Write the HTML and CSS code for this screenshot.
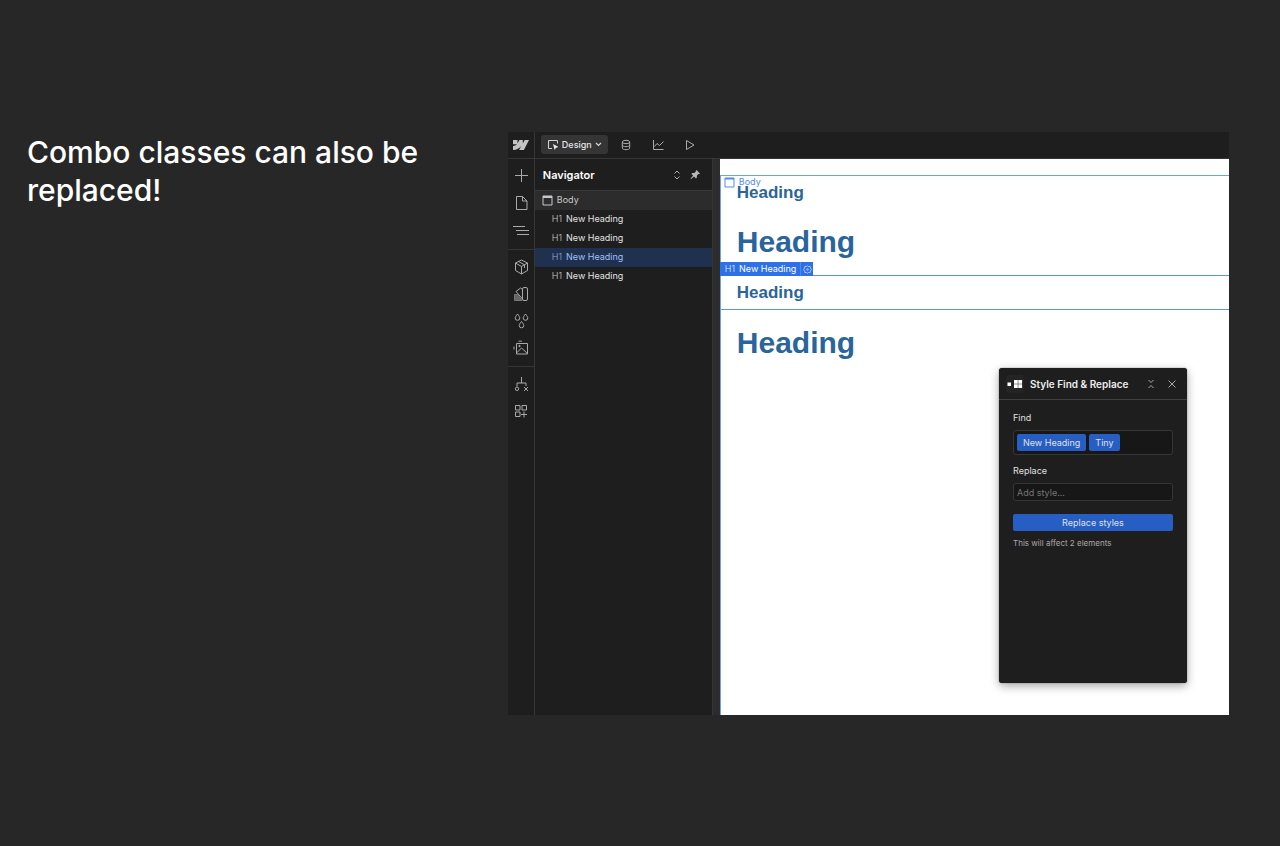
FILE: index.html
```html
<!DOCTYPE html>
<html lang="en">
<head>
<meta charset="utf-8">
<title>Style Find &amp; Replace</title>
<link rel="stylesheet" href="styles.css">
</head>
<body>
<main class="slide">
  <h1 class="slide-title">Combo classes can also be replaced!</h1>
  <section class="app">
    <header class="topbar">
      <div class="logo">
        <svg width="16" height="10" viewBox="0 0 16 10"><path fill="#c4c4c4" d="M16 0l-5.1 10H6.100l2.100-4.100C6.500 8.200 4 9.700 0 10V5.900s2.500-.1 4-1.700H0V0h4.500v3.500L6.400 0h3.400v3.500L11.700 0z"/></svg>
      </div>
      <nav class="modes">
        <button class="mode mode-active">
          <svg width="12" height="12" viewBox="0 0 12 12" fill="none" stroke="#d5d5d5"><path d="M5 9.500H1.500v-8h9v3"/><path d="M6 5l5.500 3-2.500.7L7.700 11z" fill="#eee" stroke="none"/></svg>
          <span>Design</span>
          <svg width="7" height="5" viewBox="0 0 7 5" fill="none" stroke="#d5d5d5" stroke-width="1.200"><path d="M1 1l2.500 2.500L6 1"/></svg>
        </button>
        <button class="mode" aria-label="CMS"><svg width="10" height="12" viewBox="0 0 10 12" fill="none" stroke="#ababab"><ellipse cx="5" cy="3" rx="3.700" ry="1.700"/><path d="M1.300 3v6c0 2.200 7.400 2.200 7.400 0V3M1.300 6c0 2.200 7.400 2.200 7.400 0"/></svg></button>
        <button class="mode" aria-label="Analyze"><svg width="12" height="12" viewBox="0 0 12 12" fill="none" stroke="#ababab"><path d="M1.500 1v9.500h10M2.500 7.500l2.500-3 2.500 2 4-4"/></svg></button>
        <button class="mode" aria-label="Preview"><svg width="12" height="12" viewBox="0 0 12 12" fill="none" stroke="#ababab"><path d="M2.500 1.500L10 6l-7.500 4.500z" stroke-linejoin="round"/></svg></button>
      </nav>
    </header>
    <div class="workspace">
      <nav class="rail">
        <div class="rail-group">
          <button aria-label="Add"><svg width="16" height="16" viewBox="0 0 16 16"><path d="M8.500 2v13M2 8.500h13"/></svg></button>
          <button aria-label="Pages"><svg width="16" height="16" viewBox="0 0 16 16"><path d="M3.500 1.500h6l4.500 4.500v8.500H3.500zM9.500 1.500V6H14"/></svg></button>
          <button aria-label="Navigator"><svg width="16" height="16" viewBox="0 0 16 16"><path d="M0 3.500h12M3 7.500h13M4 11.500h12"/></svg></button>
        </div>
        <div class="rail-group">
          <button aria-label="Components"><svg width="16" height="16" viewBox="0 0 16 16"><path d="M8.500 1l6 3v7.500l-6 3.500-6-3.500V4zM2.500 4l6 3.500 6-3.500M8.500 7.500V15M5.500 2.500l6 3.300V9"/></svg></button>
          <button aria-label="Variables"><svg width="16" height="16" viewBox="0 0 16 16"><path d="M9.500 13V3a1.500 1.500 0 0 1 1.500-1.500h2A1.500 1.500 0 0 1 14.500 3v10a1.500 1.500 0 0 1-1.500 1.500h-2A1.500 1.500 0 0 1 9.500 13zM9.500 3.500L7.500 2 3 5.500l6.500 7.500"/><path d="M1.500 8.500h3L9 14.500H1.500z" fill="#666" stroke="#777"/></svg></button>
          <button aria-label="Styles"><svg width="16" height="16" viewBox="0 0 16 16"><path d="M4.500 1C3 3 2.200 4 2.200 5a2.300 2.300 0 0 0 4.600 0C6.800 4 6 3 4.500 1zM12.500 1c-1.500 2-2.300 3-2.300 4a2.300 2.300 0 0 0 4.600 0c0-1-.8-2-2.300-4zM8.500 8.500c-1.500 2-2.300 3-2.300 4a2.300 2.300 0 0 0 4.600 0c0-1-.8-2-2.300-4z"/></svg></button>
          <button aria-label="Assets"><svg width="16" height="16" viewBox="0 0 16 16"><path d="M3.500 3.500h11v10.500h-11zM3.500 13l5-5 6 5.500"/><circle cx="6.500" cy="6" r=".7" fill="#aaa"/><path stroke="#777" stroke-width="1.500" d="M1 9.500V6.500M5.500 1.200H9"/></svg></button>
        </div>
        <div class="rail-group">
          <button aria-label="Logic"><svg width="16" height="16" viewBox="0 0 16 16"><path d="M8.500 1v6M4 10.500V7h9v3M11 11l4 4M15 11l-4 4"/><circle cx="4" cy="12.800" r="1.700"/></svg></button>
          <button aria-label="Apps"><svg width="16" height="16" viewBox="0 0 16 16"><path d="M2.500 2.500H7V7H2.500zM9 2.500h4.500V7H9zM2.500 9H7v4.500H2.500zM11 8.500v6M8 11.500h6"/></svg></button>
        </div>
      </nav>
      <aside class="navigator">
        <div class="nav-head">
          <h2>Navigator</h2>
          <button aria-label="Expand all"><svg width="8" height="12" viewBox="0 0 8 12" fill="none" stroke="#b0b0b0"><path d="M1.500 4.500L4 2l2.500 2.500M1.500 7.500L4 10l2.500-2.500"/></svg></button>
          <button aria-label="Pin"><svg width="11" height="11" viewBox="0 0 11 11"><path fill="#b8b8b8" d="M6.500 1L10 4.500l-1 .8-.7-.2-1.500 1.700.1 1.700-.9.900-2-2L1.200 10l-.7-.3 2.600-3.200-1.700-1.600.9-.9 1.900.1L6 2.500l-.3-.8z"/></svg></button>
        </div>
        <ul class="tree">
          <li class="tree-root"><svg width="11" height="11" viewBox="0 0 11 11"><path d="M1 1h9v9H1z" fill="none" stroke="#c8c8c8"/><path d="M1 1h9v2H1z" fill="#c8c8c8"/></svg>Body</li>
          <li><span class="tag">H1</span>New Heading</li>
          <li><span class="tag">H1</span>New Heading</li>
          <li class="selected"><span class="tag">H1</span>New Heading</li>
          <li><span class="tag">H1</span>New Heading</li>
        </ul>
      </aside>
      <div class="canvas">
        <div class="page">
          <span class="body-label"><svg width="11" height="11" viewBox="0 0 11 11"><path d="M1 1h9v9H1z" fill="none" stroke="#4e8bf5"/><path d="M1 1h9v1.500H1z" fill="#4e8bf5"/></svg>Body</span>
          <h3 class="heading tiny">Heading</h3>
          <h3 class="heading">Heading</h3>
          <div class="selection">
            <div class="badge"><span class="tag">H1</span><span>New Heading</span>
              <button aria-label="Element settings"><svg width="9" height="9" viewBox="0 0 9 9" fill="none" stroke="#c9dcff" stroke-width=".8"><path d="M3.500 1.500L4.500.7l1 .8 1.600-.1.300 1.500 1 1.600-1 1.600-.3 1.500-1.600-.1-1 .8-1-.8-1.600.1-.3-1.500-1-1.600 1-1.600.3-1.500z"/><circle cx="4.500" cy="4.500" r=".8"/></svg></button>
            </div>
            <h3 class="heading tiny">Heading</h3>
          </div>
          <h3 class="heading">Heading</h3>
        </div>
        <form class="panel">
          <div class="panel-head">
            <svg class="panel-logo" width="18" height="18" viewBox="0 0 18 18"><path fill="#fff" d="M1.500 7.500h3.500v3.500H1.500zM8 5h3.800v3.800H8zM12.300 5h3.800v3.800h-3.800zM8 9.300h3.800v3.800H8zM12.300 9.300h3.800v3.800h-3.800z"/></svg>
            <h2>Style Find &amp; Replace</h2>
            <button type="button" aria-label="Collapse"><svg width="8" height="10" viewBox="0 0 8 10" fill="none" stroke="#aaa"><path d="M1.500 1L4 3.500 6.500 1M1.500 9L4 6.500 6.500 9"/></svg></button>
            <button type="button" aria-label="Close"><svg width="8" height="8" viewBox="0 0 8 8" fill="none" stroke="#aaa"><path d="M.5.5l7 7M7.500.5l-7 7"/></svg></button>
          </div>
          <div class="panel-body">
            <span class="label">Find</span>
            <div class="chips"><button type="button" class="chip">New Heading</button><button type="button" class="chip">Tiny</button></div>
            <label class="label" for="replace">Replace</label>
            <input id="replace" type="text" placeholder="Add style...">
            <button type="button" class="primary">Replace styles</button>
            <p class="hint">This will affect 2 elements</p>
          </div>
        </form>
      </div>
    </div>
  </section>
</main>
</body>
</html>
```
FILE: styles.css
```css
* { box-sizing: border-box; }
body { margin: 0; background: #272727; color: #fff; font-family: Inter, "Liberation Sans", sans-serif; }
h1, h2, h3, p, ul { margin: 0; padding: 0; }
button { display: flex; align-items: center; justify-content: center; padding: 0; border: 0; background: none; color: inherit; font: inherit; }
svg { display: block; flex: none; }

.slide { display: grid; grid-template-columns: 2fr 3fr; padding: 132px 51px 131px 27px; min-height: 100vh; align-items: start; }
.slide-title { padding: 1px 60px 0 0; font-size: 30px; line-height: 38px; font-weight: 500; }

.app { display: flex; flex-direction: column; aspect-ratio: 721 / 583; background: #1e1e1e; font-size: 9px; line-height: 12px; }
.topbar { display: flex; height: 27px; border-bottom: 1px solid #363636; }
.logo { display: flex; align-items: center; justify-content: center; width: 27px; border-right: 1px solid #363636; }
.modes { display: flex; align-items: center; padding: 0 0 1px 6px; }
.mode { width: 32px; height: 19px; }
.mode-active { width: 67px; margin-right: 2px; gap: 3px; border-radius: 3px; background: #353535; color: #e4e4e4; font-weight: 500; }

.workspace { display: flex; flex: 1; min-height: 0; }
.rail { width: 27px; border-right: 1px solid #363636; }
.rail-group { display: flex; flex-direction: column; align-items: center; gap: 11px; padding: 9px 0 10px; border-bottom: 1px solid #363636; }
.rail-group:first-child { gap: 12px; padding-top: 8px; }
.rail-group:last-child { border-bottom: 0; }
.rail svg { fill: none; stroke: #aaa; }

.navigator { width: 178px; border-right: 1px solid #363636; }
.nav-head { display: flex; align-items: center; gap: 9px; height: 32px; padding: 0 11px 0 8px; border-bottom: 1px solid #383838; }
.nav-head h2 { flex: 1; font-size: 11px; font-weight: 600; }
.tree { list-style: none; color: #e2e2e2; }
.tree li { display: flex; align-items: center; gap: 4px; height: 19px; padding: 0 0 1px 17px; }
.tree .tree-root { padding-left: 7px; background: #2c2c2c; color: #c8c8c8; }
.tree .selected { background: #20304f; color: #9fc0f5; }
.tag { font-weight: 300; opacity: .85; }

.canvas { position: relative; flex: 1; margin-left: 7px; padding-top: 16px; background: #fff; box-shadow: -7px 0 #2c2c2c; }
.page { position: relative; height: 100%; border: solid #6ba0f8; border-width: 1px 0 0 1px; }
.body-label { position: absolute; top: 0; left: 3px; display: flex; align-items: center; gap: 4px; color: #4e8bf5; }
.heading { padding-left: 16px; color: #2a649c; font-size: 30px; line-height: 66px; font-weight: 700; font-family: "Liberation Sans", Arial, sans-serif; }
.tiny { font-size: 17px; line-height: 33px; }
.selection { position: relative; border: solid #5b93f5; border-width: 1px 0; }
.badge { position: absolute; bottom: 100%; left: -1px; display: flex; align-items: center; gap: 4px; height: 14px; padding-left: 5px; background: #2e70e8; white-space: nowrap; }
.badge button { width: 13px; height: 14px; border-left: 1px solid #5189ed; }

.panel { position: absolute; right: 42px; bottom: 32px; width: 188px; height: 315px; border-radius: 3px; background: #1e1e1e; box-shadow: 0 0 1px #222, 0 3px 10px rgba(0, 0, 0, .35); }
.panel-head { display: flex; align-items: center; gap: 13px; height: 32px; padding: 0 11px 0 7px; border-bottom: 1px solid #414141; }
.panel-head h2 { flex: 1; margin-left: -7px; font-size: 10px; font-weight: 600; color: #eee; white-space: nowrap; }
.panel-logo { border-radius: 3px; background: #242424; }
.panel-body { display: flex; flex-direction: column; padding: 12px 14px; color: #e0e0e0; }
.label { margin-bottom: 6px; }
.chips { display: flex; align-items: center; gap: 3px; height: 25px; margin-bottom: 10px; padding: 0 3px; border: 1px solid #363636; border-radius: 3px; background: #171717; }
.chip { height: 17px; padding: 0 6px; border-radius: 2px; background: #265ec4; }
input { width: 100%; height: 18px; margin: 0 0 13px; padding: 0 3px; border: 1px solid #363636; border-radius: 3px; background: #171717; color: #e0e0e0; font: inherit; }
input::placeholder { color: #757575; }
.primary { height: 17px; border-radius: 2px; background: #265ec4; }
.hint { margin-top: 6px; color: #a9a9a9; font-size: 8px; }
```
